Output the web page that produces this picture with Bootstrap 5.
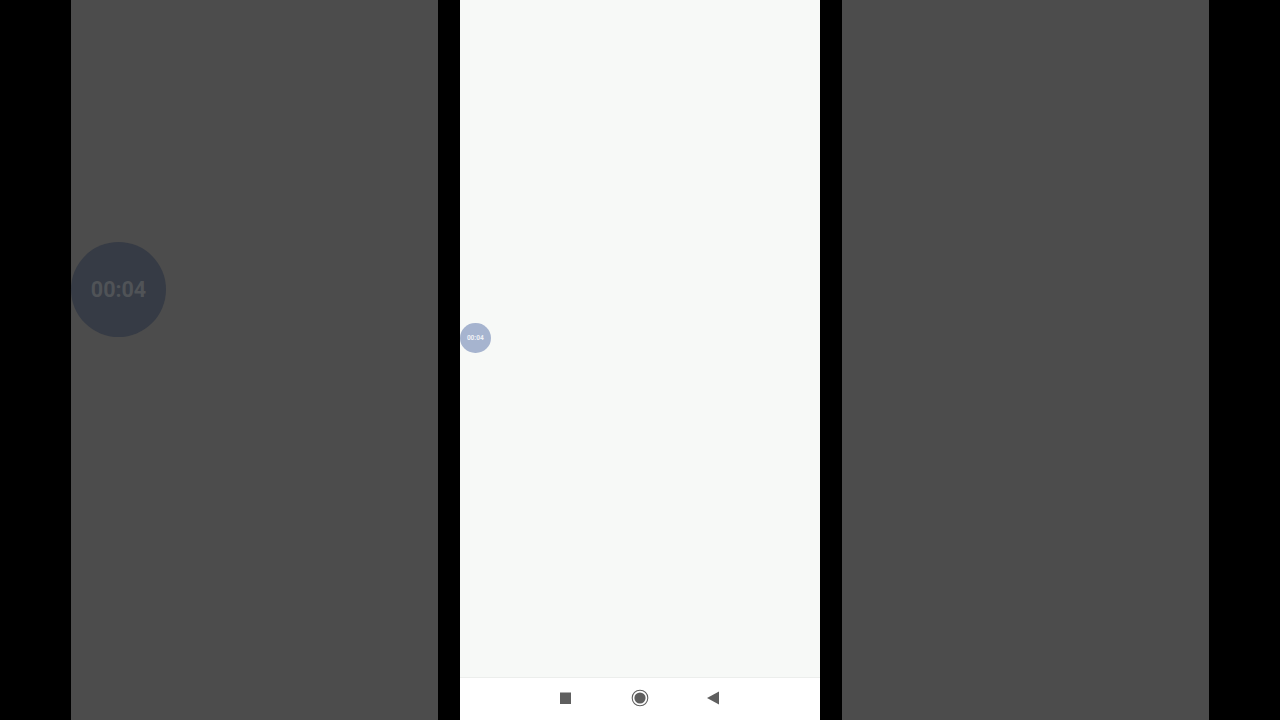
<!DOCTYPE html>
<html lang="en">
<head>
<meta charset="utf-8">
<title>Screen recording</title>
<link href="https://cdn.jsdelivr.net/npm/bootstrap@5.3.0/dist/css/bootstrap.min.css" rel="stylesheet">
<style>
html, body { height: 720px; overflow: hidden; background: #000; font-family: Roboto, "Liberation Sans", sans-serif; }
.stage { height: 720px; gap: 22px; }
.side-panel { width: 367px; background: #4c4c4c; }
.phone-panel { width: 360px; background: #f7f9f7; }
.screen-area { min-height: 0; }
.float-timer { position: absolute; left: 0; border-radius: 50%; padding-top: 1px; }
.float-big { top: 242px; width: 95px; height: 95px; background: #363b45; color: #505357; font-size: 21.5px; font-weight: 700; }
.float-small { top: 323px; width: 30.5px; height: 30px; background: #a6b4cf; color: #eef1f6; font-size: 6.5px; font-weight: 700; }
.sys-nav { height: 43px; background: #fff; border-top: 1px solid #eceeec; }
.nav-slot { position: absolute; }
.slot-square { left: 100px; top: 14px; }
.slot-home { left: 171px; top: 11px; }
.slot-back { left: 246px; top: 13px; }
</style>
</head>
<body>
<div class="stage d-flex justify-content-center">
  <div class="side-panel position-relative">
    <div class="float-timer float-big d-flex align-items-center justify-content-center">00:04</div>
  </div>
  <div class="phone-panel position-relative d-flex flex-column">
    <div class="screen-area flex-grow-1"></div>
    <div class="float-timer float-small d-flex align-items-center justify-content-center">00:04</div>
    <div class="sys-nav position-relative">
      <svg class="nav-slot slot-square" width="12" height="12" viewBox="0 0 12 12"><rect x="0" y="0.5" width="11" height="11.5" fill="#5f5f5f"/></svg>
      <svg class="nav-slot slot-home" width="18" height="18" viewBox="0 0 18 18"><circle cx="9" cy="9" r="7.8" fill="none" stroke="#5f5f5f" stroke-width="1.1"/><circle cx="9" cy="9" r="5.6" fill="#5f5f5f"/></svg>
      <svg class="nav-slot slot-back" width="13" height="14" viewBox="0 0 13 14"><polygon points="1,7 13,0.5 13,13.5" fill="#5f5f5f"/></svg>
    </div>
  </div>
  <div class="side-panel"></div>
</div>
<script src="https://cdn.jsdelivr.net/npm/bootstrap@5.3.0/dist/js/bootstrap.bundle.min.js"></script>
</body>
</html>
